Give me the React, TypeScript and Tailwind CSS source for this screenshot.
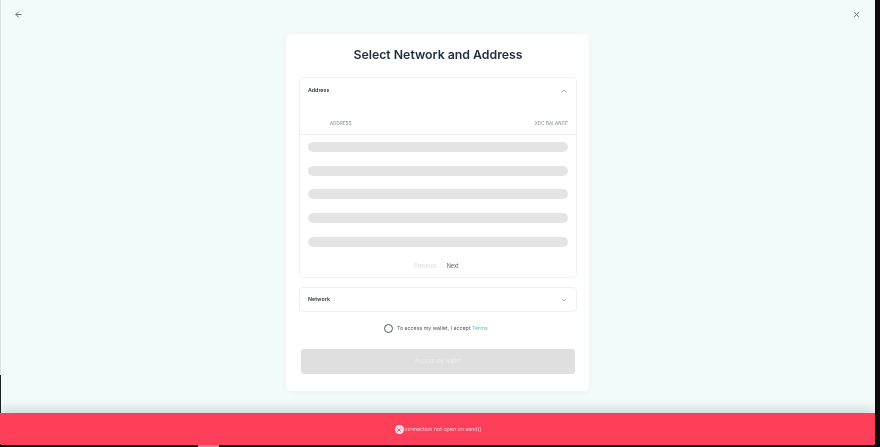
import React from "react";
import { ArrowLeft, X, ChevronUp, ChevronDown } from "lucide-react";

function Bar() {
  return <div className="h-[10px] w-full rounded-full bg-[#e4e4e4]" />;
}

export default function App() {
  return (
    <div className="relative h-[447px] w-[880px] overflow-hidden bg-[#0b0b0e] font-[Inter,sans-serif]">
      <div className="flex h-[445px] w-[875px] flex-col overflow-hidden rounded-b-[3px] bg-[#f2fafa] blur-[0.35px]">
        <div className="flex h-[34px] shrink-0 items-start justify-between pl-[14px] pr-[14px] pt-[10px]">
          <ArrowLeft className="h-[9px] w-[9px] text-[#5f6b75]" strokeWidth={2.5} />
          <X className="h-[9px] w-[9px] text-[#5f6b75]" strokeWidth={2.5} />
        </div>
        <div className="flex flex-1 justify-center">
          <div className="flex h-[357px] w-[303px] flex-col rounded-[5px] bg-white pl-[13px] pr-[12px] shadow-[0_1px_6px_rgba(0,60,60,0.04)]">
            <h1 className="mt-[11px] h-[20px] text-center text-[12.3px] font-semibold leading-[20px] text-[#1b2f40]">
              Select Network and Address
            </h1>
            <div className="mt-[12px] flex h-[201px] flex-col rounded-[4px] border border-[#eef0f1] px-[8px]">
              <div className="flex h-[26px] items-center justify-between">
                <span className="text-[5.3px] font-semibold text-[#2c3640]">Address</span>
                <ChevronUp className="h-[8px] w-[8px] text-[#7c858c]" />
              </div>
              <div className="-mx-[8px] mt-[13px] flex h-[18px] items-start justify-between border-b border-[#eceff0] pl-[30px] pr-[8px] pt-[4px] text-[4.4px] tracking-[0.2px] text-[#7a858d]">
                <span>ADDRESS</span>
                <span>XDC BALANCE</span>
              </div>
              <div className="mt-[7px] flex flex-col gap-[13.7px]">
                <Bar />
                <Bar />
                <Bar />
                <Bar />
                <Bar />
              </div>
              <div className="mt-[15px] flex justify-center gap-[10px] pr-[3px] text-[5.5px]">
                <span className="text-[#d8dcde]">Previous</span>
                <span className="text-[#5a646c]">Next</span>
              </div>
            </div>
            <div className="mt-[9px] flex h-[25px] items-center justify-between rounded-[4px] border border-[#eef0f1] px-[8px]">
              <span className="text-[5.3px] font-semibold text-[#2c3640]">Network</span>
              <ChevronDown className="h-[8px] w-[8px] text-[#7c858c]" />
            </div>
            <div className="mt-[12px] flex items-center justify-center gap-[3.5px] pr-[4px] text-[5.3px] text-[#4a555e]">
              <span className="h-[9px] w-[9px] rounded-full border border-[#4d5860]" />
              <span>
                To access my wallet, I accept <span className="text-[#5cc4bd]">Terms</span>
              </span>
            </div>
            <div className="mx-[2px] mt-[16px] flex h-[25px] items-center justify-center rounded-[3px] bg-[#dfdfdf] text-[5.5px] font-medium text-[#ececec]">
              Access my wallet
            </div>
          </div>
        </div>
        <div className="z-10 flex h-[32px] shrink-0 items-center justify-center gap-[1px] bg-[#fd3f5a] pl-[1px] pt-[1px] text-[5.3px] text-[#fbd5da] shadow-[0_-3px_12px_rgba(0,40,40,0.18)]">
          <span className="flex h-[9px] w-[9px] items-center justify-center rounded-full bg-[#fde6e9]">
            <X className="h-[6px] w-[6px] text-[#fd3f5a]" strokeWidth={3.5} />
          </span>
          <span>connection not open on send()</span>
        </div>
      </div>
      <div className="ml-[198px] h-[2px] w-[21px] bg-[#c58aa8]" />
      <div className="absolute left-0 top-0 h-[375px] w-[1px] bg-[#dbe3e3]" />
      <div className="absolute left-0 top-[375px] h-[38px] w-[1px] bg-[#1a2024]" />
    </div>
  );
}
